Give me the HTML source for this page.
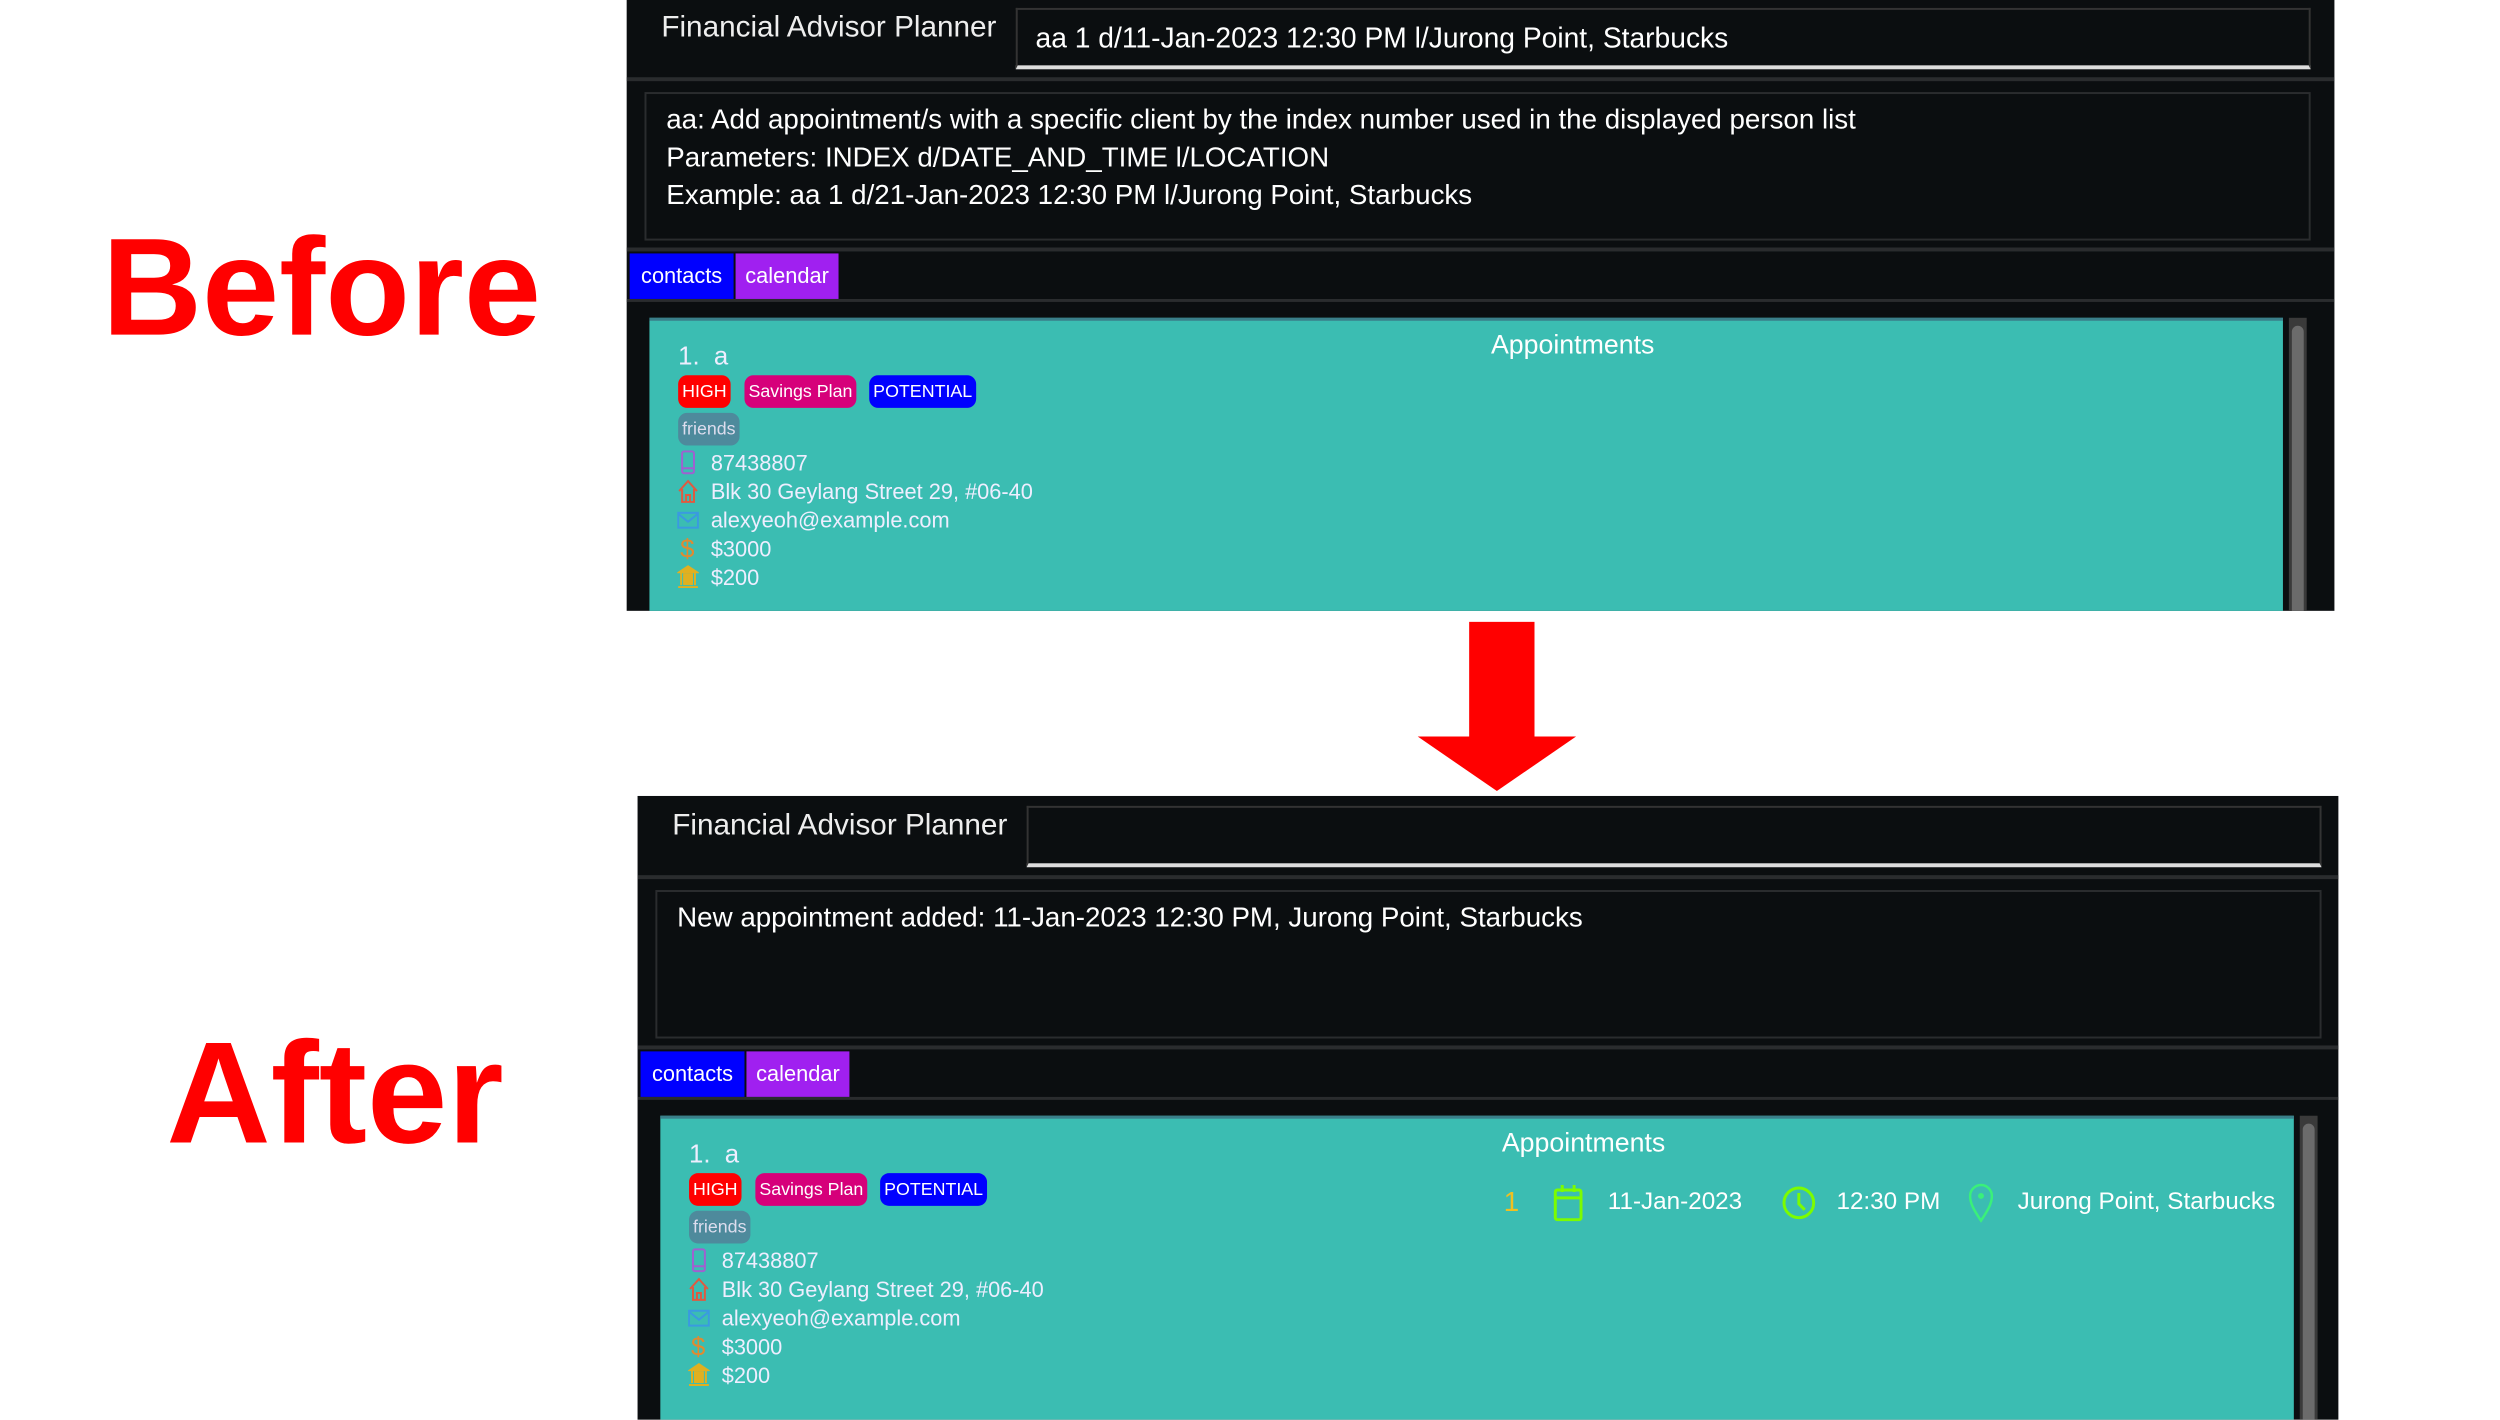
<!DOCTYPE html>
<html><head><meta charset="utf-8"><style>
*{margin:0;padding:0;box-sizing:border-box}
body{width:2500px;height:1406px;background:#fff;position:relative;overflow:hidden;font-family:"Liberation Sans",sans-serif}
#w{position:absolute;left:0;top:0;width:2530px;height:1430px;transform:scale(0.99);transform-origin:0 0}
.big{position:absolute;color:#f00;font-weight:bold;line-height:1}
.panel{position:absolute;width:1725px;background:#0b0e10;overflow:hidden}
.panel>*{position:absolute}
.title{left:35px;top:13px;color:#eee;font-size:30px}
.inp{left:393px;top:10px;width:1308px;height:62px;border:2px solid #333;border-bottom:4px solid #ddd;color:#fff;font-size:28.5px;padding:13px 18px}
.sep{left:0;width:1725px;height:4px;background:#2a2c2e}
.res{left:18px;top:95px;width:1683px;height:150px;border:2px solid #2a2c2e;color:#fff;font-size:28px;line-height:38px;padding:7px 20px}
.tab{top:258px;height:46px;color:#fff;font-size:22px;line-height:46px;text-align:center}
.card{left:23px;top:323px;width:1650px;height:320px;background:#3bbdb2;color:#eef;border-top:3px solid #3a7f8a}
.card>*{position:absolute}
.sb{left:1679px;top:323px;width:18px;height:320px;background:#3a3a3a}
.sb i{position:absolute;left:3px;top:8px;width:12px;height:320px;background:#6b6b6b;border-radius:6px}
.tag{top:55px;height:33px;border-radius:9px;color:#fff;font-size:18px;line-height:33px;padding:0 4px}
.ln{left:28px;font-size:22px;line-height:28px;white-space:nowrap}
.ln svg{vertical-align:-5px;margin-right:12px}
</style></head><body><div id="w">
<div class="big" style="left:103px;top:220px;font-size:140px">Before</div>
<div class="big" style="left:168px;top:1031px;font-size:146px">After</div>
<svg style="position:absolute;left:1432px;top:628px" width="160" height="172"><rect x="52" y="0" width="66" height="118" fill="#f00"/><polygon points="0,116 160,116 80,171" fill="#f00"/></svg>

<!-- BEFORE -->
<div class="panel" style="left:633px;top:-2px;height:619px">
<div class="title">Financial Advisor Planner</div>
<div class="inp">aa 1 d/11-Jan-2023 12:30 PM l/Jurong Point, Starbucks</div>
<div class="sep" style="top:80px"></div>
<div class="res">aa: Add appointment/s with a specific client by the index number used in the displayed person list<br>Parameters: INDEX d/DATE_AND_TIME l/LOCATION<br>Example: aa 1 d/21-Jan-2023 12:30 PM l/Jurong Point, Starbucks</div>
<div class="sep" style="top:252px"></div>
<div class="tab" style="left:3px;width:105px;background:#0000ff">contacts</div>
<div class="tab" style="left:110px;width:104px;background:#a020f0">calendar</div>
<div class="sep" style="top:304px;height:3px"></div>
<div class="card">
 <div style="left:29px;top:20px;font-size:26px">1.&nbsp; a</div>
 <div style="left:850px;top:9px;font-size:27px;color:#fff">Appointments</div>
 <div class="tag" style="left:29px;background:#f00">HIGH</div>
 <div class="tag" style="left:96px;background:#d6007a">Savings Plan</div>
 <div class="tag" style="left:222px;background:#0000ff">POTENTIAL</div>
 <div class="tag" style="left:29px;top:93px;background:#4e8a9c;color:#dde">friends</div>
 <div class="ln" style="top:130px"><svg width="22" height="26"><rect x="5" y="2" width="12" height="22" rx="2" fill="none" stroke="#a060d0" stroke-width="2"/><line x1="5" y1="19" x2="17" y2="19" stroke="#a060d0" stroke-width="2"/></svg>87438807</div>
 <div class="ln" style="top:159px"><svg width="22" height="26"><path d="M2 13 L11 3 L20 13 M5 11 V24 H17 V11 M9 24 V17 H13 V24" fill="none" stroke="#e05a40" stroke-width="2"/></svg>Blk 30 Geylang Street 29, #06-40</div>
 <div class="ln" style="top:188px"><svg width="22" height="26"><rect x="1" y="6" width="20" height="15" fill="none" stroke="#3a9ae0" stroke-width="2"/><path d="M1 7 L11 15 L21 7" fill="none" stroke="#3a9ae0" stroke-width="2"/></svg>alexyeoh@example.com</div>
 <div class="ln" style="top:217px"><svg width="22" height="26"><text x="3" y="22" font-size="26" fill="#e08a30" font-family="Liberation Sans">$</text></svg>$3000</div>
 <div class="ln" style="top:246px"><svg width="22" height="26"><path d="M2 8 L11 2 L20 8 Z M4 9 V21 M18 9 V21 M1 23 H21" fill="#e0b020" stroke="#e0b020" stroke-width="2"/><rect x="6" y="9" width="10" height="12" fill="#e0b020"/></svg>$200</div>
</div>
<div class="sb"><i></i></div>
</div>

<!-- AFTER -->
<div class="panel" style="left:644px;top:804px;height:630px;width:1718px">
<div class="title">Financial Advisor Planner</div>
<div class="inp"></div>
<div class="sep" style="top:80px"></div>
<div class="res">New appointment added: 11-Jan-2023 12:30 PM, Jurong Point, Starbucks</div>
<div class="sep" style="top:252px"></div>
<div class="tab" style="left:3px;width:105px;background:#0000ff">contacts</div>
<div class="tab" style="left:110px;width:104px;background:#a020f0">calendar</div>
<div class="sep" style="top:304px;height:3px"></div>
<div class="card">
 <div style="left:29px;top:20px;font-size:26px">1.&nbsp; a</div>
 <div style="left:850px;top:9px;font-size:27px;color:#fff">Appointments</div>
 <div class="tag" style="left:29px;background:#f00">HIGH</div>
 <div class="tag" style="left:96px;background:#d6007a">Savings Plan</div>
 <div class="tag" style="left:222px;background:#0000ff">POTENTIAL</div>
 <div class="tag" style="left:29px;top:93px;background:#4e8a9c;color:#dde">friends</div>
 <div class="ln" style="top:130px"><svg width="22" height="26"><rect x="5" y="2" width="12" height="22" rx="2" fill="none" stroke="#a060d0" stroke-width="2"/><line x1="5" y1="19" x2="17" y2="19" stroke="#a060d0" stroke-width="2"/></svg>87438807</div>
 <div class="ln" style="top:159px"><svg width="22" height="26"><path d="M2 13 L11 3 L20 13 M5 11 V24 H17 V11 M9 24 V17 H13 V24" fill="none" stroke="#e05a40" stroke-width="2"/></svg>Blk 30 Geylang Street 29, #06-40</div>
 <div class="ln" style="top:188px"><svg width="22" height="26"><rect x="1" y="6" width="20" height="15" fill="none" stroke="#3a9ae0" stroke-width="2"/><path d="M1 7 L11 15 L21 7" fill="none" stroke="#3a9ae0" stroke-width="2"/></svg>alexyeoh@example.com</div>
 <div class="ln" style="top:217px"><svg width="22" height="26"><text x="3" y="22" font-size="26" fill="#e08a30" font-family="Liberation Sans">$</text></svg>$3000</div>
 <div class="ln" style="top:246px"><svg width="22" height="26"><path d="M2 8 L11 2 L20 8 Z M4 9 V21 M18 9 V21 M1 23 H21" fill="#e0b020" stroke="#e0b020" stroke-width="2"/><rect x="6" y="9" width="10" height="12" fill="#e0b020"/></svg>$200</div>
 <div style="left:852px;top:68px;font-size:28px;color:#f0c020">1</div>
 <svg style="left:900px;top:66px" width="34" height="38"><rect x="4" y="6" width="26" height="30" rx="2" fill="none" stroke="#7cfc00" stroke-width="3"/><line x1="4" y1="14" x2="30" y2="14" stroke="#7cfc00" stroke-width="3"/><line x1="11" y1="1" x2="11" y2="8" stroke="#7cfc00" stroke-width="3"/><line x1="23" y1="1" x2="23" y2="8" stroke="#7cfc00" stroke-width="3"/></svg>
 <div style="left:957px;top:70px;font-size:24.5px;color:#fff">11-Jan-2023</div>
 <svg style="left:1132px;top:67px" width="36" height="36"><circle cx="18" cy="18" r="15" fill="none" stroke="#7cfc00" stroke-width="3"/><path d="M18 8 V19 L24 25" fill="none" stroke="#7cfc00" stroke-width="3"/></svg>
 <div style="left:1188px;top:70px;font-size:24.5px;color:#fff">12:30 PM</div>
 <svg style="left:1320px;top:65px" width="28" height="40"><path d="M14 38 C6 26 3 20 3 13 A11 11 0 0 1 25 13 C25 20 22 26 14 38 Z" fill="none" stroke="#3af07a" stroke-width="2.5"/><circle cx="14" cy="13" r="3" fill="#3af07a"/></svg>
 <div style="left:1371px;top:70px;font-size:24.5px;color:#fff">Jurong Point, Starbucks</div>
</div>
<div class="sb"><i></i></div>
</div>
</div></body></html>
